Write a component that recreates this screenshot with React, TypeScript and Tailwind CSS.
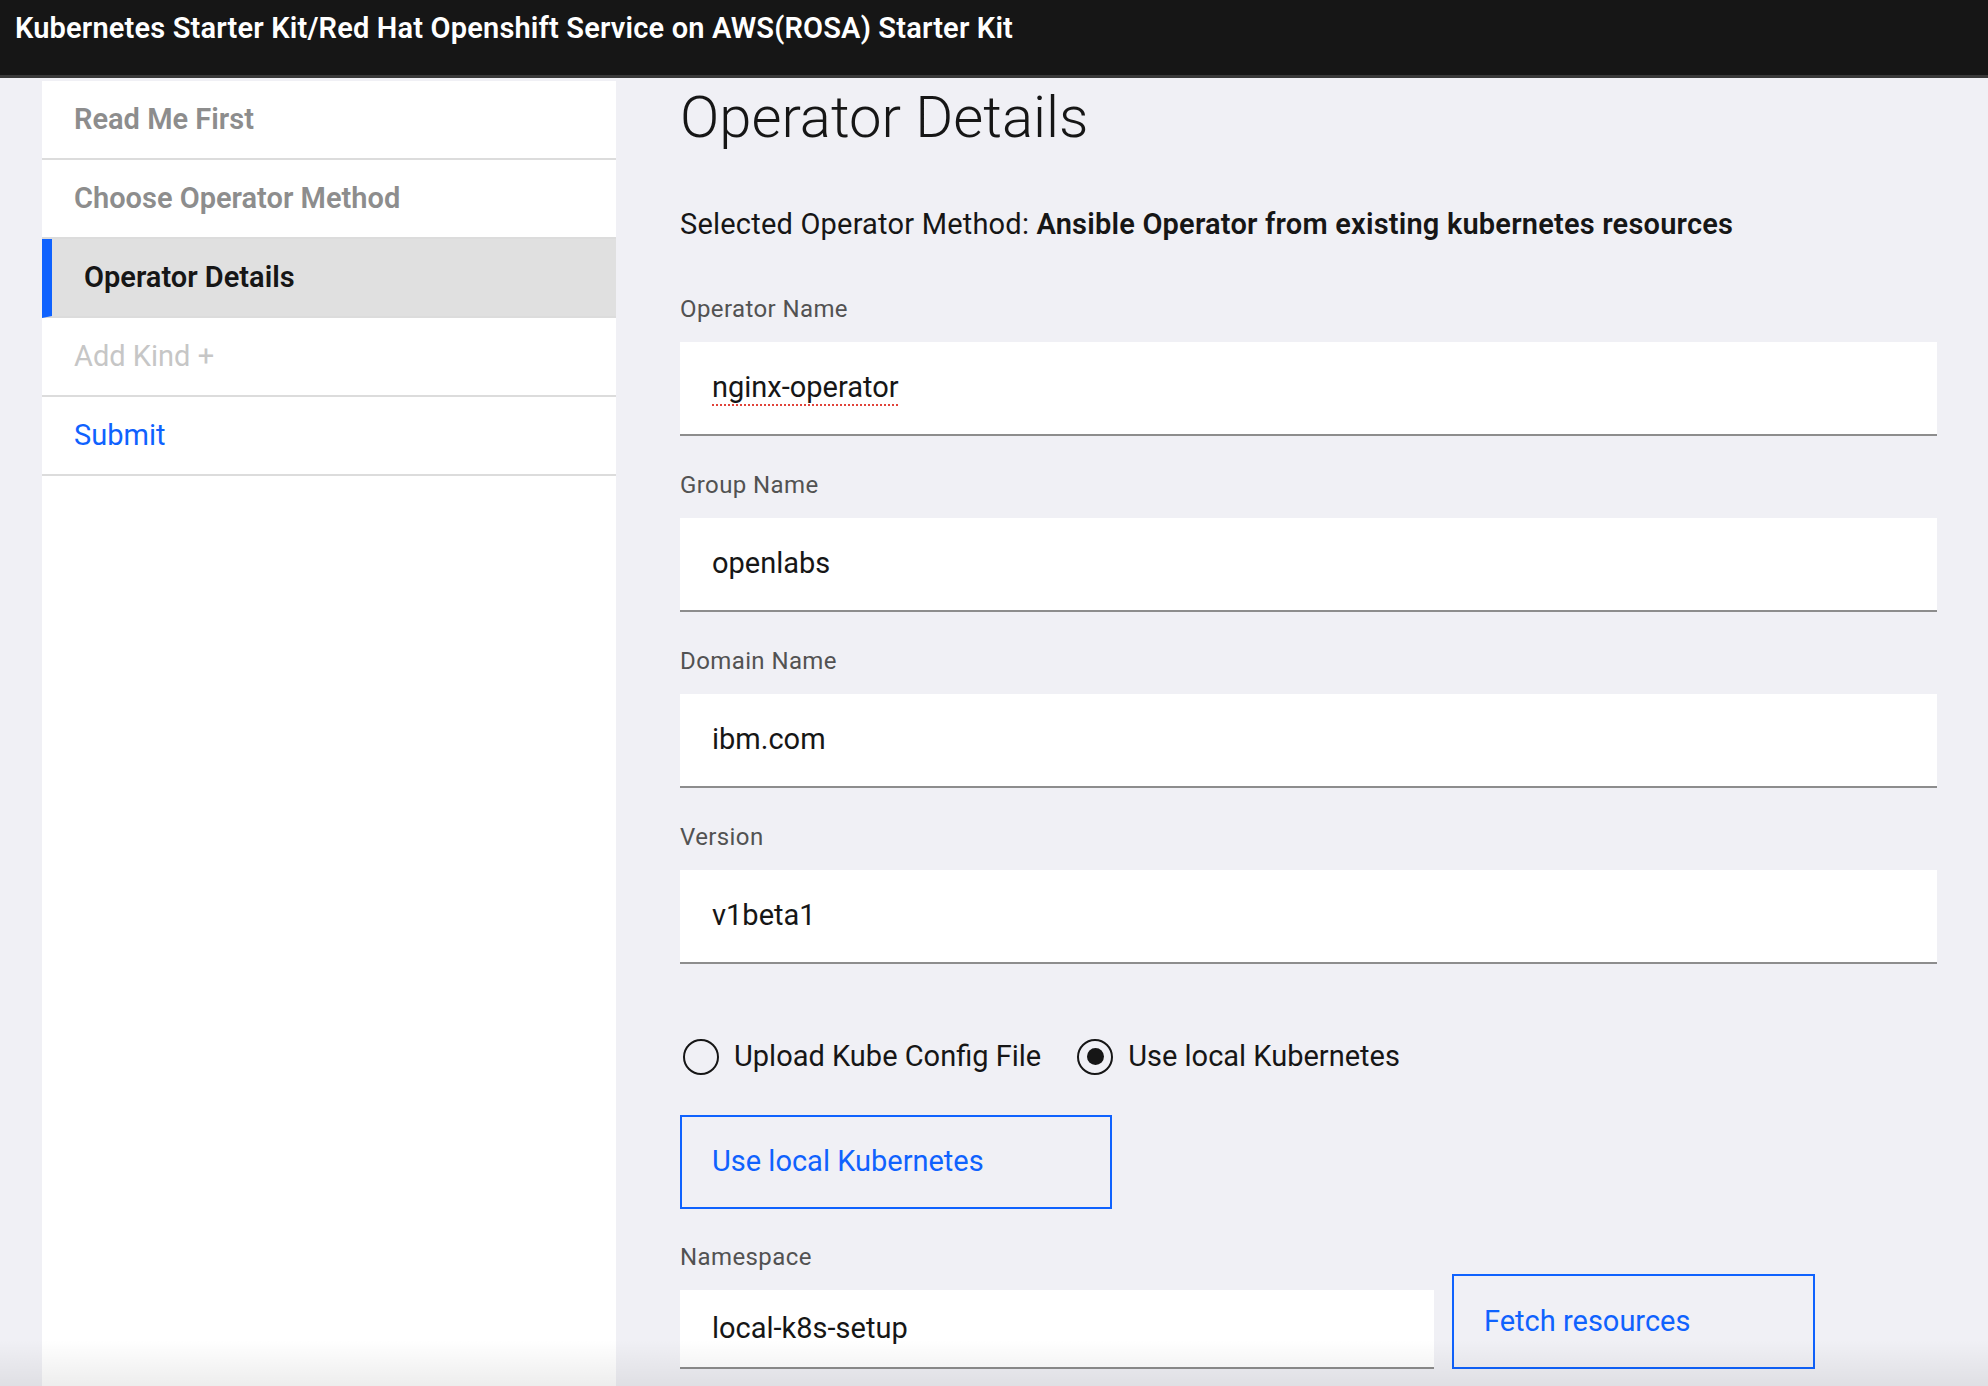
import React from "react";

const font = "font-['Roboto','Liberation_Sans',sans-serif]";

function Field({ label, value, spell }: { label: string; value: string; spell?: boolean }) {
  return (
    <div className="flex flex-col mb-[34px]">
      <label className="text-[24px] leading-[30px] text-[#525252] tracking-[0.4px] mb-[18px]">{label}</label>
      <div className="h-[94px] bg-white border-b-2 border-[#8d8d8d] flex items-center px-[32px] text-[29px] text-[#161616]">
        <span className={spell ? "underline decoration-dotted decoration-[#e0433a] decoration-2 underline-offset-[7px]" : ""}>
          {value}
        </span>
      </div>
    </div>
  );
}

function Radio({ label, checked }: { label: string; checked?: boolean }) {
  return (
    <div className="flex items-center gap-[15px] h-[43px]">
      <span className="w-[36px] h-[36px] rounded-full border-2 border-[#161616] flex items-center justify-center">
        {checked && <span className="w-[17px] h-[17px] rounded-full bg-[#161616]" />}
      </span>
      <span className="text-[29px] text-[#161616]">{label}</span>
    </div>
  );
}

export default function App() {
  const steps = [
    { text: "Read Me First", cls: "text-[#8d8d8d] font-semibold" },
    { text: "Choose Operator Method", cls: "text-[#8d8d8d] font-semibold" },
    { text: "Operator Details", cls: "text-[#161616] font-semibold", active: true },
    { text: "Add Kind +", cls: "text-[#c6c6c6]" },
    { text: "Submit", cls: "text-[#0f62fe]" },
  ];

  return (
    <div className={`relative h-screen overflow-hidden bg-[#f0f0f5] ${font}`}>
      <header className="h-[78px] bg-[#161616] border-b-[3px] border-[#393939] flex items-center px-[15px] pb-[17px]">
        <h1 className="text-white text-[29px] font-semibold tracking-[0.17px]">
          Kubernetes Starter Kit/Red Hat Openshift Service on AWS(ROSA) Starter Kit
        </h1>
      </header>

      <div className="flex gap-[64px] pl-[42px] pr-[51px] pt-[3px] h-[calc(100%-78px)]">
        <nav className="w-[574px] shrink-0 bg-white h-full">
          {steps.map((s, i) => (
            <div
              key={i}
              className={`h-[79px] flex items-center border-b-2 border-[#dcdcdc] text-[29px] ${
                s.active ? "bg-[#e0e0e0] border-l-[10px] border-l-[#0f62fe] pl-[32px]" : "pl-[32px]"
              } ${s.cls}`}
            >
              {s.text}
            </div>
          ))}
        </nav>

        <main className="flex-1 flex flex-col">
          <h2 className="text-[58px] font-light leading-[72px] text-[#161616]">Operator Details</h2>
          <p className="mt-[53px] text-[29px] leading-[36px] text-[#161616] tracking-[0.2px]">
            Selected Operator Method: <span className="font-semibold">Ansible Operator from existing kubernetes resources</span>
          </p>
          <div className="mt-[52px] flex flex-col">
            <Field label="Operator Name" value="nginx-operator" spell />
            <Field label="Group Name" value="openlabs" />
            <Field label="Domain Name" value="ibm.com" />
            <Field label="Version" value="v1beta1" />
          </div>

          <div className="mt-[37px] flex items-center gap-[36px] pl-[3px]">
            <Radio label="Upload Kube Config File" />
            <Radio label="Use local Kubernetes" checked />
          </div>

          <button className="mt-[37px] w-[432px] h-[94px] border-2 border-[#0f62fe] text-left pl-[30px] text-[29px] text-[#0f62fe]">
            Use local Kubernetes
          </button>

          <div className="mt-[33px] flex items-end gap-[18px]">
            <div className="flex flex-col w-[754px]">
              <label className="text-[24px] leading-[30px] text-[#525252] tracking-[0.4px] mb-[18px]">Namespace</label>
              <div className="h-[79px] bg-white border-b-2 border-[#8d8d8d] flex items-center px-[32px] text-[29px] text-[#161616]">
                local-k8s-setup
              </div>
            </div>
            <button className="w-[363px] h-[95px] border-2 border-[#0f62fe] text-left pl-[30px] text-[29px] text-[#0f62fe]">
              Fetch resources
            </button>
          </div>
        </main>
      </div>

      <div className="pointer-events-none absolute inset-x-0 bottom-0 h-[46px] bg-gradient-to-b from-transparent to-[#00000012]" />
    </div>
  );
}
